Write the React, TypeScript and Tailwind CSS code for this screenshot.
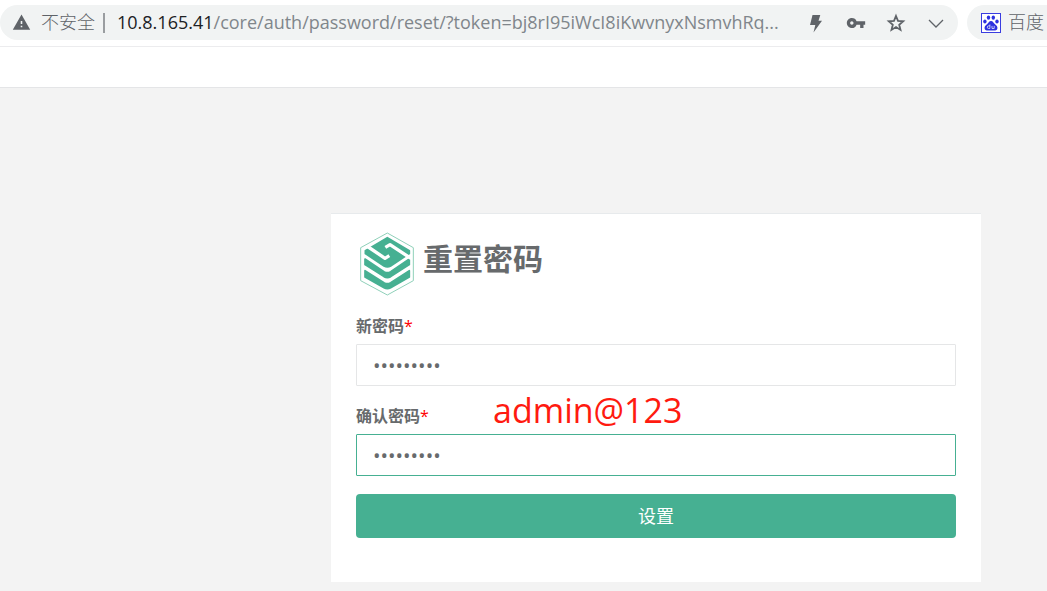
import { MdVpnKey, MdWarning } from "react-icons/md";

function Logo() {
  return (
    <svg viewBox="30 22 162 192" className="h-16 w-[54px] shrink-0" aria-hidden="true">
      <g fill="#46b092" stroke="#46b092" strokeWidth="5" strokeLinejoin="round">
        <path d="M112 39 178 78V87L122 124Q112 130 102 124L46 87V78Z" />
        <path d="M45 103 102 141Q112 147 122 141L178 103V120L122 156Q112 162 102 156L45 120Z" />
        <path d="M45 138 102 174Q112 180 122 174L178 138V157L122 189Q112 195 102 189L45 157Z" />
      </g>
      <g fill="none" stroke="#fff" strokeWidth="10" strokeLinejoin="round">
        <path d="M106 68 120 60 184 102" />
        <path d="M46 61 105 101 118 93" />
      </g>
      <path d="M112 25 190 69V168L112 211 32 168V69Z" fill="none" stroke="#8fd0b9" strokeWidth="3" />
    </svg>
  );
}

function BaiduIcon() {
  return (
    <svg viewBox="0 0 20 20" className="size-5 shrink-0" aria-hidden="true">
      <rect x="0.5" y="0.5" width="19" height="19" fill="#fff" stroke="#3a3de0" />
      <g fill="#2d32df">
        <ellipse cx="3.9" cy="8.400" rx="1.700" ry="2" />
        <ellipse cx="7.5" cy="4.600" rx="1.700" ry="2.200" />
        <ellipse cx="12.300" cy="4.600" rx="1.700" ry="2.200" />
        <ellipse cx="16" cy="8.400" rx="1.700" ry="2" />
        <path d="M10 8c2 0 2.600 2 4 3.200 1.700 1.400 2.900 2.600 2.300 4.700-.9 2.300-3.900 1.500-6.300 1.500s-5.400.8-6.300-1.500c-.6-2.100.6-3.300 2.300-4.700C7.400 10 8 8 10 8Z" />
      </g>
      <path d="M8.900 11.500v4H7.600a1.300 1.300 0 0 1 0-2.600h1.300M11 12.900v2.600h2.200v-2.600" fill="none" stroke="#fff" strokeWidth="0.700" />
    </svg>
  );
}

function BoltIcon() {
  return (
    <svg viewBox="0 0 20 20" className="size-5" fill="currentColor" aria-hidden="true">
      <path d="M6.500 2H14.300L12.500 7.800H16L7.500 19.500 9.300 12H4Z" />
    </svg>
  );
}

function StarIcon() {
  return (
    <svg viewBox="0 0 20 20" className="size-5" fill="none" stroke="currentColor" strokeWidth="1.800" aria-hidden="true">
      <path d="M10 3 12 7.900 17.200 8.300 13.200 11.700 14.500 16.900 10 14.100 5.500 16.900 6.800 11.700 2.800 8.300 8 7.900Z" />
    </svg>
  );
}

function ChevronIcon() {
  return (
    <svg viewBox="0 0 20 20" className="size-5" fill="none" stroke="currentColor" strokeWidth="1.300" aria-hidden="true">
      <path d="M3 7 10 14 17 7" />
    </svg>
  );
}

function PasswordField({ id, label, active = false }: { id: string; label: string; active?: boolean }) {
  return (
    <div className="mb-[18px] flex flex-col">
      <label htmlFor={id} className="mb-1.5 text-[16px] leading-6 font-bold text-[#676a6c]">
        {label}
        <span className="font-normal text-[#ff0000]">*</span>
      </label>
      <input
        id={id}
        type="password"
        defaultValue="admin@123"
        className={
          active
            ? "h-[42px] w-full rounded-[1px] border border-[#46b092] bg-white px-4 text-[20px] text-[#676a6c] outline-none"
            : "h-[42px] w-full rounded-[1px] border border-[#e5e6e7] bg-white px-4 text-[20px] text-[#676a6c] outline-none"
        }
      />
    </div>
  );
}

export default function App() {
  return (
    <div className="flex min-h-screen flex-col bg-[#f3f3f3] font-['Open_Sans','Noto_Sans_CJK_SC',sans-serif]">
      <header className="flex h-[47px] items-start gap-[9px] overflow-hidden border-b border-[#ececee] bg-white pt-[5px]">
        <div className="flex h-[35px] min-w-0 flex-1 items-center rounded-full bg-[#f1f3f3] px-3">
          <MdWarning className="mr-2.5 size-[19px] shrink-0 text-[#5f6368]" />
          <span className="shrink-0 text-[18px] font-light text-[#5f6368]">不安全</span>
          <span className="mr-3 ml-2 h-5 w-0.5 shrink-0 bg-[#9a9da0]" />
          <span className="min-w-0 flex-1 truncate text-[18px] text-[#80868b]">
            <span className="text-[#202124]">10.8.165.41</span>
            /core/auth/password/reset/?token=bj8rI95iWcI8iKwvnyxNsmvhRq...
          </span>
          <div className="flex shrink-0 items-center gap-5 text-[#5f6368]">
            <button type="button" aria-label="闪电"><BoltIcon /></button>
            <button type="button" aria-label="密码"><MdVpnKey className="size-5" /></button>
            <button type="button" aria-label="收藏"><StarIcon /></button>
            <button type="button" aria-label="更多"><ChevronIcon /></button>
          </div>
        </div>
        <a href="#baidu" className="flex h-[35px] w-20 shrink-0 items-center gap-[7px] overflow-hidden rounded-l-full bg-[#f1f3f3] pl-3.5 text-[18px] font-light text-[#5f6368]">
          <BaiduIcon />
          <span className="shrink-0">百度</span>
        </a>
      </header>
      <div className="h-[41px] border-b border-[#e4e5e7] bg-white" />
      <main className="flex flex-1 items-start justify-end px-[66px] pt-[125px] pb-2">
        <section className="relative w-full max-w-[650px] border-t border-[#e7eaec] bg-white px-[25px] pt-[18px] pb-11">
          <div className="mb-[18px] flex items-start gap-[9px] pl-1">
            <Logo />
            <h1 className="pt-[9px] text-[30px] leading-9 font-bold text-[#676a6c]">重置密码</h1>
          </div>
          <form onSubmit={(e) => e.preventDefault()}>
            <PasswordField id="new-password" label="新密码" />
            <PasswordField id="confirm-password" label="确认密码" active />
            <button type="submit" className="h-11 w-full rounded bg-[#46b092] text-[18px] text-white">
              设置
            </button>
          </form>
          <p className="absolute top-[172px] left-[162px] text-[34px] leading-12 text-[#ff1a10]">admin@123</p>
        </section>
      </main>
    </div>
  );
}
